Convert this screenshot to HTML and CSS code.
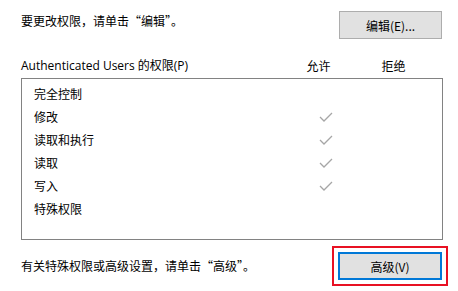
FILE: index.html
```html
<!DOCTYPE html>
<html lang="zh-CN">
<head>
<meta charset="utf-8">
<link rel="stylesheet" href="styles.css">
</head>
<body>
<div class="page">
  <div class="top-row">
    <span class="msg">要更改权限，请单击“编辑”。</span>
    <button class="btn">编辑(E)...</button>
  </div>
  <div class="header-row">
    <span class="hdr-name">Authenticated Users 的权限(P)</span>
    <span class="hdr-col allow">允许</span>
    <span class="hdr-col deny">拒绝</span>
  </div>
  <div class="list">
    <div class="row"><span class="name">完全控制</span><span class="chk"></span></div>
    <div class="row"><span class="name">修改</span><span class="chk"><svg viewBox="0 0 14 10" width="14" height="10"><polyline points="1,5 5,9 13,1" fill="none" stroke="#a6a6a6" stroke-width="1.3"/></svg></span></div>
    <div class="row"><span class="name">读取和执行</span><span class="chk"><svg viewBox="0 0 14 10" width="14" height="10"><polyline points="1,5 5,9 13,1" fill="none" stroke="#a6a6a6" stroke-width="1.3"/></svg></span></div>
    <div class="row"><span class="name">读取</span><span class="chk"><svg viewBox="0 0 14 10" width="14" height="10"><polyline points="1,5 5,9 13,1" fill="none" stroke="#a6a6a6" stroke-width="1.3"/></svg></span></div>
    <div class="row"><span class="name">写入</span><span class="chk"><svg viewBox="0 0 14 10" width="14" height="10"><polyline points="1,5 5,9 13,1" fill="none" stroke="#a6a6a6" stroke-width="1.3"/></svg></span></div>
    <div class="row"><span class="name">特殊权限</span><span class="chk"></span></div>
  </div>
  <div class="bottom-row">
    <span class="msg">有关特殊权限或高级设置，请单击“高级”。</span>
    <button class="btn btn-focus">高级(V)</button>
  </div>
</div>
</body>
</html>
```
FILE: styles.css
```css
html, body {
  margin: 0;
  padding: 0;
  background: #ffffff;
}
.page {
  width: 458px;
  height: 291px;
  font-family: "Noto Sans CJK SC", "Open Sans", sans-serif;
  font-size: 12px;
  color: #000000;
  box-sizing: border-box;
  padding: 11px 0 0 21px;
}
.top-row {
  display: flex;
  justify-content: space-between;
  align-items: flex-start;
  width: 421px;
  height: 28px;
}
.msg {
  line-height: 20px;
}
.btn {
  width: 103px;
  height: 28px;
  box-sizing: border-box;
  border: 1px solid #adadad;
  background: #e1e1e1;
  font-family: "Noto Sans CJK SC", "Open Sans", sans-serif;
  font-size: 12px;
  color: #000;
  padding: 0;
  margin: 0;
}
.header-row {
  display: flex;
  align-items: center;
  height: 20px;
  margin-top: 16px;
  width: 422px;
}
.hdr-name {
  font-family: "Open Sans", "Noto Sans CJK SC", sans-serif;
  flex: 1;
}
.hdr-col {
  width: 73px;
  text-align: center;
}
.allow {
  margin-right: 2px;
}
.deny {
  margin-right: 13px;
}
.list {
  margin-top: 3px;
  width: 422px;
  height: 162px;
  box-sizing: border-box;
  border: 1px solid #828282;
  padding: 3px 0 0 12px;
}
.row {
  display: flex;
  align-items: center;
  height: 23px;
}
.name {
  flex: 1;
}
.chk {
  width: 14px;
  height: 10px;
  margin-right: 109px;
  display: flex;
}
.bottom-row {
  display: flex;
  justify-content: space-between;
  align-items: center;
  width: 421px;
  margin-top: 12px;
}
.btn-focus {
  border: 2px solid #0078d7;
  width: 104px;
  height: 28px;
  outline: 2px solid #e81123;
  outline-offset: 4px;
  margin-right: 0;
}
```
